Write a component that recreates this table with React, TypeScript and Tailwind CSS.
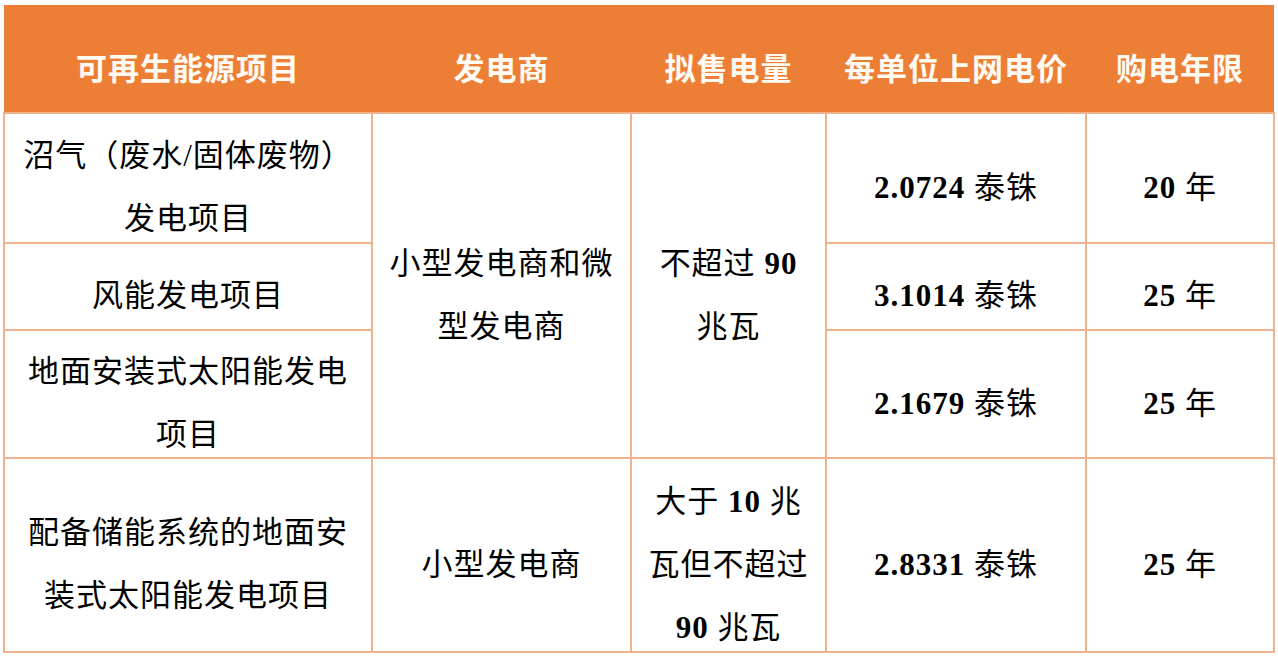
const serif = "font-['Liberation_Serif','Noto_Sans_CJK_SC',serif]";

const Num = ({ n, unit }: { n: string; unit: string }) => (
    <>
        <span className="font-bold">{n}</span> {unit}
    </>
);

// Cell text sits a little below the middle, as in the source document
const Cell = ({ children, rowSpan }: { children: React.ReactNode; rowSpan?: number }) => (
    <td
        rowSpan={rowSpan}
        className="border-2 border-[#eeb38d] px-2 py-0 text-center align-middle leading-[63px]"
    >
        <div className="pt-[9px] -mb-[9px]">{children}</div>
    </td>
);

export default function App() {
    const th = "text-center align-middle font-bold pt-[16px] leading-[63px] text-[#fffaf2]";

    return (
        <div className="min-h-screen bg-white pl-[3px] pt-[5px]">
            <table
                className={`w-[1270px] table-fixed border-collapse text-[31px] tracking-[1px] text-black ${serif}`}
            >
                <colgroup>
                    <col className="w-[368px]" />
                    <col className="w-[259px]" />
                    <col className="w-[195px]" />
                    <col className="w-[260px]" />
                    <col className="w-[188px]" />
                </colgroup>
                <thead>
                    <tr className="h-[108px] bg-[#ec7f35] font-['Noto_Sans_CJK_SC',sans-serif]">
                        <th className={th}>可再生能源项目</th>
                        <th className={th}>发电商</th>
                        <th className={th}>拟售电量</th>
                        <th className={th}>每单位上网电价</th>
                        <th className={th}>购电年限</th>
                    </tr>
                </thead>
                <tbody>
                    <tr className="h-[130px]">
                        <Cell>
                            沼气（废水/固体废物）
                            <br />
                            发电项目
                        </Cell>
                        <Cell rowSpan={3}>
                            小型发电商和微
                            <br />
                            型发电商
                        </Cell>
                        <Cell rowSpan={3}>
                            不超过 <span className="font-bold">90</span>
                            <br />
                            兆瓦
                        </Cell>
                        <Cell>
                            <Num n="2.0724" unit="泰铢" />
                        </Cell>
                        <Cell>
                            <Num n="20" unit="年" />
                        </Cell>
                    </tr>
                    <tr className="h-[87px]">
                        <Cell>风能发电项目</Cell>
                        <Cell>
                            <Num n="3.1014" unit="泰铢" />
                        </Cell>
                        <Cell>
                            <Num n="25" unit="年" />
                        </Cell>
                    </tr>
                    <tr className="h-[128px]">
                        <Cell>
                            地面安装式太阳能发电
                            <br />
                            项目
                        </Cell>
                        <Cell>
                            <Num n="2.1679" unit="泰铢" />
                        </Cell>
                        <Cell>
                            <Num n="25" unit="年" />
                        </Cell>
                    </tr>
                    <tr className="h-[194px]">
                        <Cell>
                            配备储能系统的地面安
                            <br />
                            装式太阳能发电项目
                        </Cell>
                        <Cell>小型发电商</Cell>
                        <Cell>
                            大于 <span className="font-bold">10</span> 兆
                            <br />
                            瓦但不超过
                            <br />
                            <span className="font-bold">90</span> 兆瓦
                        </Cell>
                        <Cell>
                            <Num n="2.8331" unit="泰铢" />
                        </Cell>
                        <Cell>
                            <Num n="25" unit="年" />
                        </Cell>
                    </tr>
                </tbody>
            </table>
        </div>
    );
}
